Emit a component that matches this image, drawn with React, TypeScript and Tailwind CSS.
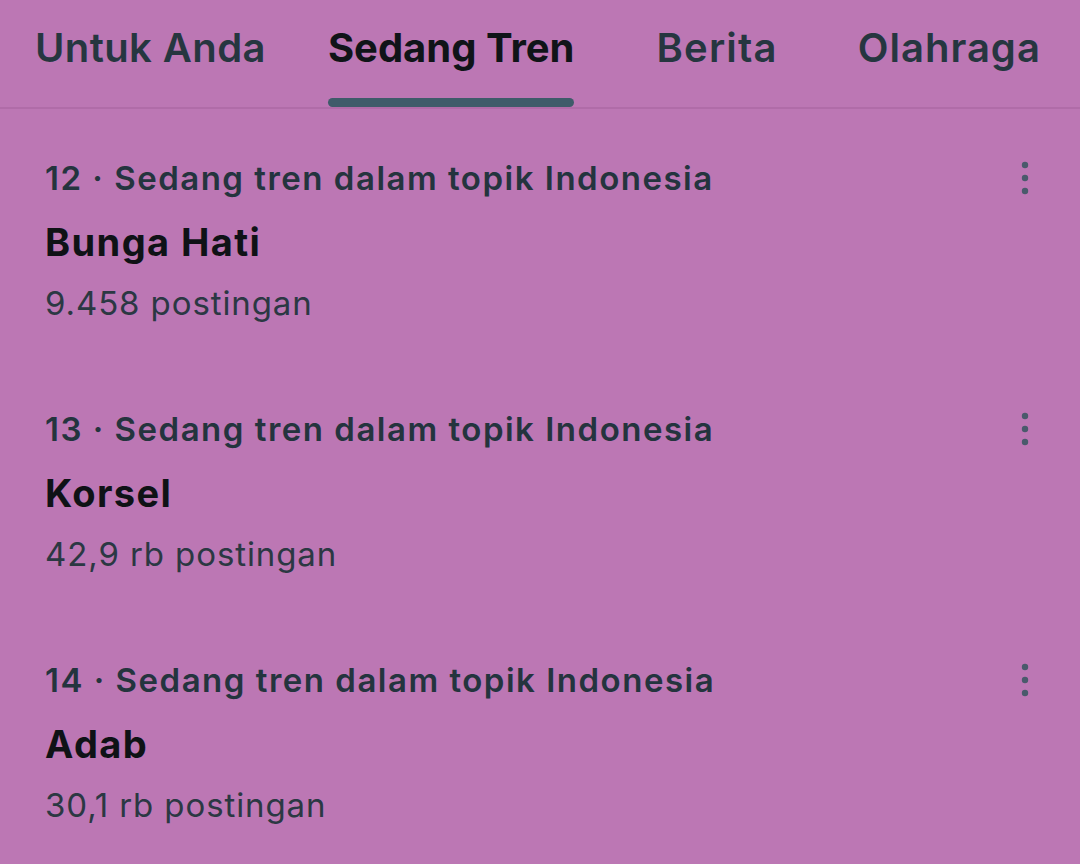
const tabs = [
  { label: 'Untuk Anda', active: false, offset: 'ml-[35px] tracking-[0.4px]' },
  { label: 'Sedang Tren', active: true, offset: 'ml-[62px]' },
  { label: 'Berita', active: false, offset: 'ml-[82px] tracking-[1.2px]' },
  { label: 'Olahraga', active: false, offset: 'ml-[80px] tracking-[1px]' },
];

const trends = [
  { rank: 12, topic: 'Indonesia', name: 'Bunga Hati', posts: '9.458 postingan' },
  { rank: 13, topic: 'Indonesia', name: 'Korsel', posts: '42,9 rb postingan' },
  { rank: 14, topic: 'Indonesia', name: 'Adab', posts: '30,1 rb postingan' },
];

const MoreIcon = () => (
  <svg width="12" height="34" viewBox="0 0 12 34" className="text-[#4a5a6c]">
    <circle cx="6" cy="4" r="3.2" fill="currentColor" />
    <circle cx="6" cy="17" r="3.2" fill="currentColor" />
    <circle cx="6" cy="30" r="3.2" fill="currentColor" />
  </svg>
);

export default function App() {
  return (
    <div className="w-[1080px] h-[864px] overflow-hidden bg-[#bc77b4] font-['Inter','Liberation_Sans',sans-serif]">
      {/* Tabs */}
      <nav className="flex h-[109px] border-b-2 border-[#b06ca8]">
        {tabs.map((t) => (
          <div key={t.label} className={`relative flex flex-col items-center pt-[24px] ${t.offset}`}>
            <span
              className={
                t.active
                  ? 'text-[40px] leading-[48px] font-bold text-[#101418]'
                  : 'text-[40px] leading-[48px] font-semibold text-[#263640]'
              }
            >
              {t.label}
            </span>
            {t.active && (
              <div className="absolute bottom-0 left-0 right-0 h-[9px] rounded-full bg-[#3f5b6a]" />
            )}
          </div>
        ))}
      </nav>

      {/* Trend list */}
      <div className="flex flex-col">
        {trends.map((t) => (
          <div key={t.rank} className="flex justify-between pl-[45px] pr-[49px] pt-[49px] pb-[37px]">
            <div className="flex flex-col">
              <p className="h-[40px] leading-[40px] text-[33px] font-semibold text-[#24343e] tracking-[1.5px]">
                {t.rank} · Sedang tren dalam topik {t.topic}
              </p>
              <p className="mt-[20px] h-[48px] leading-[48px] text-[38px] font-bold text-[#0f1216] tracking-[1.4px]">
                {t.name}
              </p>
              <p className="mt-[17px] h-[40px] leading-[40px] text-[33px] font-normal text-[#2b3843] tracking-[0.9px]">
                {t.posts}
              </p>
            </div>
            <div className="pt-[3px]">
              <MoreIcon />
            </div>
          </div>
        ))}
      </div>
    </div>
  );
}
